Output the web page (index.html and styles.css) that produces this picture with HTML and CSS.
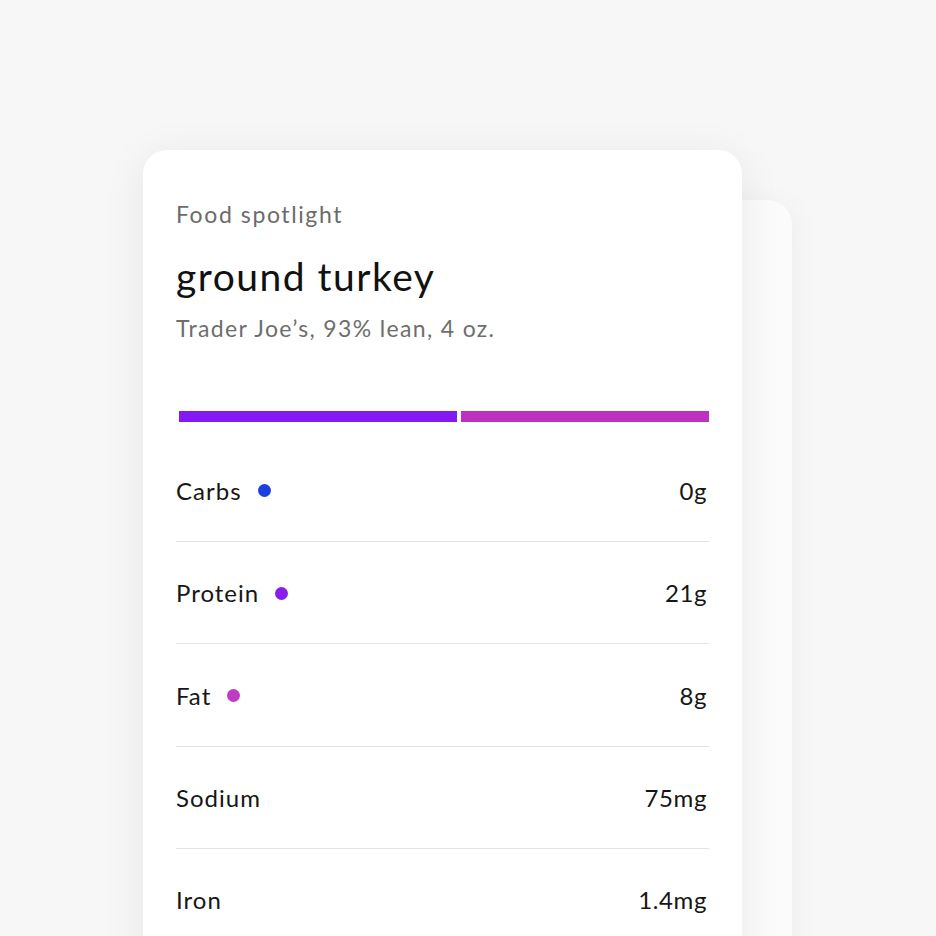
FILE: index.html
```html
<!DOCTYPE html>
<html>
<head>
<meta charset="utf-8">
<link rel="stylesheet" href="styles.css">
</head>
<body>
<div class="stage">
  <div class="back-card"></div>
  <div class="card">
    <div class="eyebrow">Food spotlight</div>
    <h1 class="title">ground turkey</h1>
    <div class="subtitle">Trader Joe’s, 93% lean, 4 oz.</div>
    <div class="bar">
      <div class="seg protein" style="width:278px"></div>
      <div class="seg fat" style="width:248px"></div>
    </div>
    <ul class="rows">
      <li class="row"><span class="label">Carbs <i class="dot carbs"></i></span><span class="value">0g</span></li>
      <li class="row"><span class="label">Protein <i class="dot protein"></i></span><span class="value">21g</span></li>
      <li class="row"><span class="label">Fat <i class="dot fat"></i></span><span class="value">8g</span></li>
      <li class="row"><span class="label">Sodium</span><span class="value">75mg</span></li>
      <li class="row"><span class="label">Iron</span><span class="value">1.4mg</span></li>
    </ul>
  </div>
</div>
</body>
</html>
```

FILE: styles.css
```css
html, body {
  margin: 0;
  padding: 0;
  background: #f7f7f7;
  height: 936px;
  overflow: hidden;
  font-family: "Lato", "Noto Sans", sans-serif;
}
.stage {
  position: relative;
  width: 936px;
  height: 936px;
}
.back-card {
  position: absolute;
  left: 692px;
  top: 200px;
  width: 100px;
  height: 800px;
  background: #fbfbfb;
  border-radius: 24px;
  box-shadow: 0 4px 30px rgba(0,0,0,0.05);
}
.card {
  position: absolute;
  left: 143px;
  top: 150px;
  width: 599px;
  height: 900px;
  background: #fff;
  border-radius: 24px;
  box-shadow: 0 6px 44px rgba(0,0,0,0.07);
  box-sizing: border-box;
  padding: 50px 33px 0 33px;
}
.eyebrow {
  font-size: 23px;
  line-height: 28px;
  letter-spacing: 1.6px;
  color: #6b6b6b;
}
.title {
  margin: 24px 0 0 0;
  font-weight: 400;
  font-size: 39px;
  line-height: 48px;
  letter-spacing: 1.5px;
  color: #111;
}
.subtitle {
  margin-top: 14px;
  font-size: 23px;
  line-height: 28px;
  letter-spacing: 1.35px;
  color: #6e6e6e;
}
.bar {
  display: flex;
  gap: 4px;
  margin: 69px 0 0 3px;
  height: 11px;
}
.seg { height: 11px; }
.seg.protein { background: #8419f1; }
.seg.fat { background: #bd30c0; }
.rows {
  list-style: none;
  margin: 17px 0 0 0;
  padding: 0;
}
.row {
  display: flex;
  justify-content: space-between;
  align-items: center;
  height: 101.4px;
  font-size: 24px;
  letter-spacing: 1px;
  color: #161616;
  padding-right: 2px;
}
.row:first-child { height: 102px; }
.row + .row { border-top: 1px solid #e2e2e2; }
.label { display: flex; align-items: center; gap: 16px; }
.value { letter-spacing: 0.6px; }
.dot {
  display: inline-block;
  width: 13px;
  height: 13px;
  border-radius: 50%;
  margin-top: 1px;
}
.dot.carbs { background: #1c3fe2; }
.dot.protein { background: #8a1cf2; }
.dot.fat { background: #c03bc4; }
```
